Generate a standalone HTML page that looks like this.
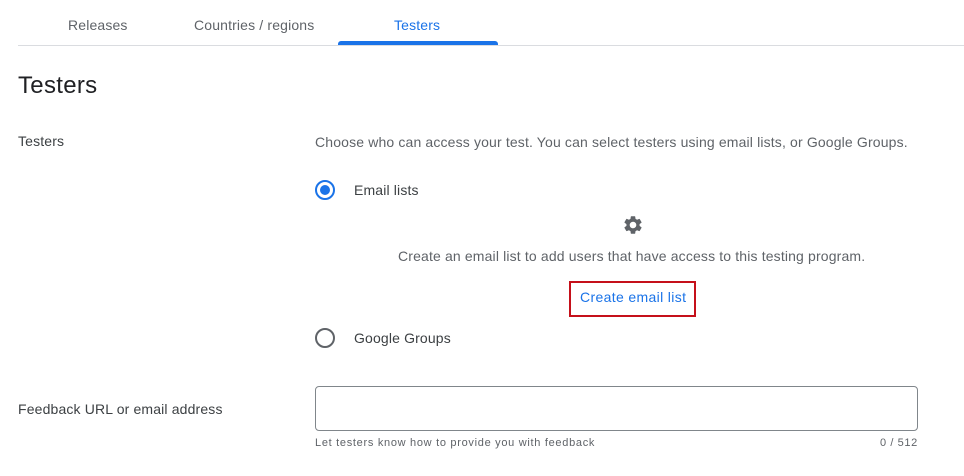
<!DOCTYPE html>
<html><head><style>
body{margin:0;width:964px;height:476px;background:#fff;font-family:"Liberation Sans",sans-serif;position:relative;overflow:hidden;color:#202124;letter-spacing:0.15px}
.a{position:absolute;white-space:nowrap}
</style></head><body>
<div class="a" style="left:18px;top:45px;width:946px;height:1px;background:#dadce0"></div>
<div class="a" style="left:68px;top:17px;font-size:14px;color:#5f6368">Releases</div>
<div class="a" style="left:194px;top:17px;font-size:14px;color:#5f6368">Countries / regions</div>
<div class="a" style="left:394px;top:17px;font-size:14px;color:#1a73e8">Testers</div>
<div class="a" style="left:338px;top:41px;width:160px;height:4px;background:#1a73e8;border-radius:3px 3px 0 0"></div>
<div class="a" style="left:18px;top:72px;font-size:24px;color:#202124;letter-spacing:0.3px">Testers</div>
<div class="a" style="left:18px;top:133px;font-size:14px;color:#3c4043">Testers</div>
<div class="a" style="left:315px;top:134px;font-size:14px;color:#5f6368">Choose who can access your test. You can select testers using email lists, or Google Groups.</div>
<div class="a" style="left:315px;top:180px;width:16px;height:16px;border:2px solid #1a73e8;border-radius:50%"></div>
<div class="a" style="left:320px;top:185px;width:10px;height:10px;background:#1a73e8;border-radius:50%"></div>
<div class="a" style="left:354px;top:182px;font-size:14px;color:#3c4043">Email lists</div>
<svg class="a" style="left:622px;top:214px" width="22" height="22" viewBox="0 0 24 24"><path fill="#5f6368" d="M19.14 12.94c.04-.3.06-.61.06-.94 0-.32-.02-.64-.07-.94l2.03-1.58a.49.49 0 00.12-.61l-1.92-3.32a.488.488 0 00-.59-.22l-2.39.96c-.5-.38-1.030-.7-1.62-.94l-.36-2.54a.484.484 0 00-.48-.41h-3.84c-.24 0-.43.17-.47.41l-.36 2.54c-.59.24-1.13.57-1.62.94l-2.39-.96c-.22-.08-.47 0-.59.22L2.74 8.87c-.12.21-.08.47.12.61l2.030 1.58c-.05.3-.09.63-.09.94s.2.64.07.94l-2.03 1.58a.49.49 0 00-.12.61l1.92 3.32c.12.22.37.29.59.22l2.39-.96c.5.38 1.03.7 1.62.94l.36 2.54c.05.24.24.41.48.41h3.84c.24 0 .44-.17.47-.41l.36-2.54c.59-.24 1.13-.56 1.62-.94l2.39.96c.22.08.47 0 .59-.22l1.92-3.32c.12-.22.07-.47-.12-.61l-2.01-1.58zM12 15.6c-1.98 0-3.6-1.62-3.6-3.6s1.62-3.6 3.6-3.6 3.6 1.62 3.6 3.6-1.62 3.6-3.6 3.6z"/></svg>
<div class="a" style="left:398px;top:248px;font-size:14px;color:#5f6368">Create an email list to add users that have access to this testing program.</div>
<div class="a" style="left:569px;top:281px;width:123px;height:32px;border:2px solid #c5101a"></div>
<div class="a" style="left:580px;top:289px;font-size:14px;color:#1a73e8;letter-spacing:0.35px">Create email list</div>
<div class="a" style="left:315px;top:328px;width:16px;height:16px;border:2px solid #5f6368;border-radius:50%"></div>
<div class="a" style="left:354px;top:330px;font-size:14px;color:#3c4043">Google Groups</div>
<div class="a" style="left:18px;top:401px;font-size:14px;color:#3c4043">Feedback URL or email address</div>
<div class="a" style="left:315px;top:386px;width:601px;height:43px;border:1px solid #80868b;border-radius:4px"></div>
<div class="a" style="left:315px;top:437px;font-size:11px;color:#5f6368;letter-spacing:0.7px">Let testers know how to provide you with feedback</div>
<div class="a" style="left:880px;top:437px;font-size:11px;color:#5f6368;letter-spacing:0.6px">0 / 512</div>
</body></html>
